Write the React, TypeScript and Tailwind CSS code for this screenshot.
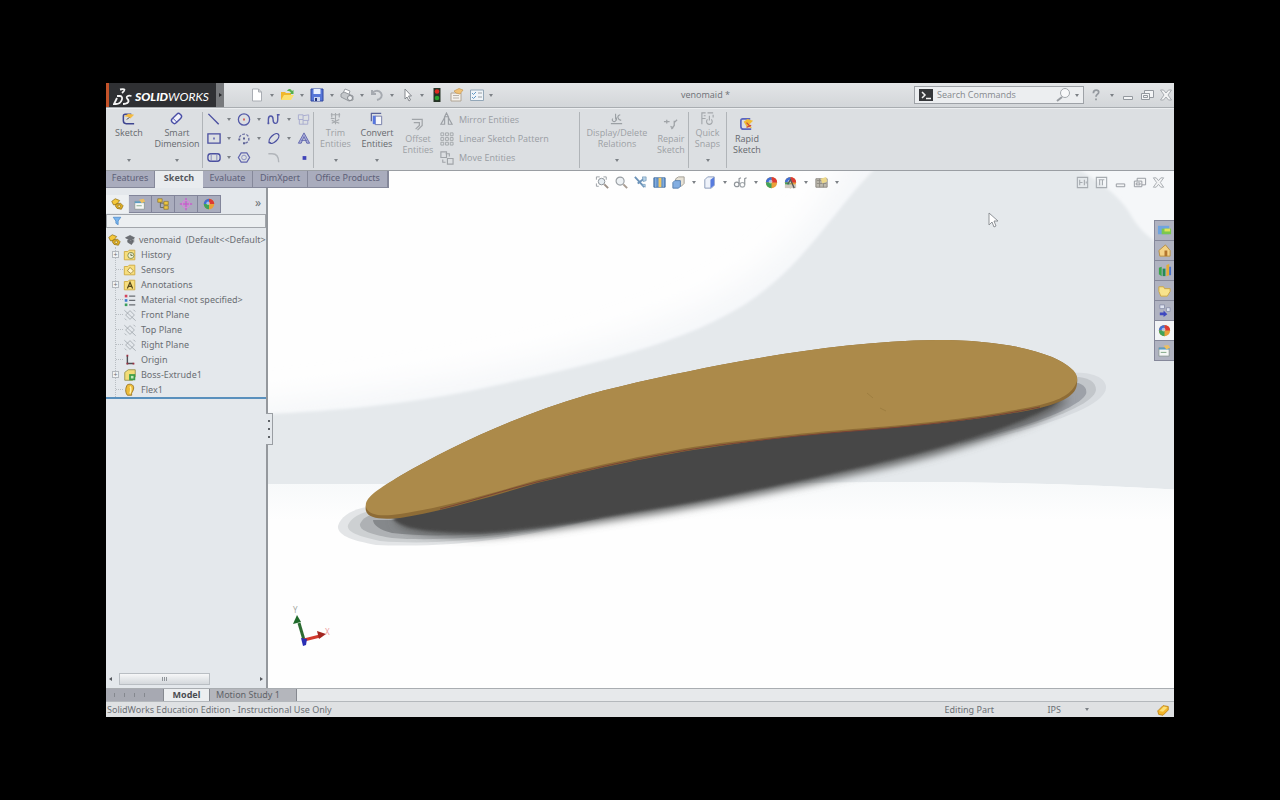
import type { ReactNode } from "react";
import { clsx } from "clsx";

const Icon = ({ children, className }: { children: ReactNode; className?: string }) => (
  <svg viewBox="0 0 16 16" fill="none" aria-hidden="true" className={clsx("shrink-0", className ?? "h-4 w-4")}>
    {children}
  </svg>
);

const Ball = () => (
  <>
    <circle cx="8" cy="8" r="6" fill="#e9a13a" />
    <path d="M8 8V2a6 6 0 0 1 6 6Z" fill="#dc3a35" />
    <path d="M8 8V2a6 6 0 0 0-6 6Z" fill="#3f6fd6" />
    <path d="M8 8H2a6 6 0 0 0 6 6Z" fill="#3fa45a" />
    <circle cx="7" cy="7" r="2" fill="#fff" opacity=".55" />
  </>
);

const Part = () => (
  <g stroke="#8a6a12" strokeWidth=".8">
    <path d="M2 5 6 2l5 2-3 4-4 1Z" fill="#f5c83a" />
    <path d="m7 8 5-1 3 3-2 4-5-1-2-3Z" fill="#e3b020" />
    <circle cx="10.500" cy="10.500" r="1.500" fill="#fff3b8" />
  </g>
);

const Folder = () => <path d="M1.500 4h4l1.500-1.500h6.500v11h-12Z" fill="#f7de7e" stroke="#cfa83a" />;

const Plane = () => (
  <path d="m3 8 5-5 5 5-5 5ZM1.500 2.500l13 12M4 14l-2-2M12 2l2 2" stroke="#9da3a9" strokeWidth=".9" />
);

const icons = {
  fresh: <path d="M3.500 2h6l3 3v9h-9ZM9.500 2v3h3" fill="#fff" stroke="#a9adb3" />,
  open: (
    <>
      <path d="M2 13V5h4l1 1h5v7Z" fill="#f0b72c" />
      <path d="m2 13 3-5h10l-3 5Z" fill="#fbe070" />
      <path d="M8 4c2-3 4-2 5 0l1.500-1v4H11l1-1c-1-2-2-2-4-2" fill="#55b04a" />
    </>
  ),
  save: (
    <>
      <path d="M2 2h12v12H2Z" fill="#5676d8" stroke="#3047a0" />
      <path d="M4.500 2h7v5h-7Z" fill="#e8f0ff" />
      <path d="M5 10h6v4H5Z" fill="#c8d4f0" />
      <path d="M6 11h2v3H6Z" fill="#27367c" />
    </>
  ),
  print: (
    <>
      <path d="m4 6 2-4 5 2-1 3" fill="#fff" stroke="#9a9ea3" />
      <path d="m2 7 3-2 9 4v4l-4 1-8-4Z" fill="#c5c8cb" stroke="#94989d" />
      <circle cx="11" cy="11" r="2.500" fill="#eceef0" stroke="#85898e" />
    </>
  ),
  undo: <path d="M3 3v4h4M3 7c2-4 7-4 9-1s0 6-4 7" stroke="#a6aab0" strokeWidth="2" />,
  select: <path d="M6 2v10l2-2 2 4 1.500-1-2-4h3Z" fill="#fff" stroke="#85898e" />,
  traffic: (
    <>
      <path d="M4.500 1h7v14h-7Z" fill="#263326" />
      <circle cx="8" cy="4.500" r="2.300" fill="#e02a20" />
      <circle cx="8" cy="11" r="2.300" fill="#2aa52f" />
    </>
  ),
  props: (
    <>
      <path d="M2 6h10v8H2Z" fill="#f4f1ec" stroke="#b0a494" />
      <path d="M4 8.500h6M4 11h6" stroke="#b7b2ab" />
      <path d="m5 4 5-2.500 4 1.500-3 4-4-1Z" fill="#f0c276" stroke="#c79752" strokeWidth=".7" />
    </>
  ),
  options: (
    <>
      <path d="M1.500 3h13v10.500h-13Z" fill="#eff4f8" stroke="#93a7b8" />
      <path d="m3 6 1.500 1.500L7 5M3 10l1.500 1.500L7 9" stroke="#5f96c4" />
      <path d="M9 6h4M9 10h4" stroke="#9aa0a6" />
    </>
  ),
  help: <path d="M5 6c0-5 7-4 6-1 0 2-3 2-3 5M8 12v2" stroke="#94999f" strokeWidth="2" />,
  min: <path d="M3.500 9.500h9v3h-9Z" fill="#f4f5f6" stroke="#94999f" />,
  restore: (
    <>
      <path d="M5.500 3.500h9v7h-9Z" fill="#f4f5f6" stroke="#94999f" />
      <path d="M2.500 6.500h8v6h-8ZM4.500 8.500h4v2h-4Z" fill="#f4f5f6" stroke="#94999f" />
    </>
  ),
  close: (
    <path
      d="M2.500 3h3L8 6l2.500-3h3L10 8l3.500 5h-3L8 10l-2.500 3h-3L6 8Z"
      fill="#f2f3f4"
      stroke="#a0a5aa"
      strokeWidth=".9"
    />
  ),
  sketch: (
    <>
      <path d="M11 3.500H4.500q-2 0-2 2v5q0 3 3 3H14" stroke="#3e4590" strokeWidth="1.600" />
      <path d="M3 5.500 8 3l6 1-4 4-3-2Z" fill="#f3bb42" />
      <path d="m6 9 3-2" stroke="#555" />
    </>
  ),
  dimension: (
    <g transform="rotate(-45 8 8)">
      <rect x="2" y="5" width="12" height="6" rx="2.500" fill="#f1f2fb" stroke="#4a4fa6" strokeWidth="1.500" />
      <path d="M5.500 5v6" stroke="#4a4fa6" />
    </g>
  ),
  line: <path d="m2 2 11 11" stroke="#4a4fa0" strokeWidth="1.500" />,
  circle: (
    <>
      <circle cx="8" cy="8" r="6" stroke="#5258a8" strokeWidth="1.400" />
      <path d="M7 7h2v2H7Z" fill="#d8635a" />
    </>
  ),
  spline: <path d="M2 13V8c0-5 5-5 5 0s5 6 5 0V3M1 12h2M11 3h3" stroke="#5258a8" strokeWidth="1.500" />,
  plane: <path d="M2 3h5v5H2ZM7 4l6-1v6H7M3 8v5h9V9M7 8v5" stroke="#a8abcf" />,
  rect: (
    <>
      <path d="M1.500 3h13v10h-13Z" stroke="#4a4fa0" strokeWidth="1.400" />
      <path d="M7 7h2v2H7Z" fill="#7378b8" />
    </>
  ),
  arc: (
    <>
      <path d="M3 7c2-5 9-5 10 0 1 4-2 6-5 6" stroke="#6c70a5" strokeWidth="1.400" strokeDasharray="3 1.500" />
      <path d="M7 7h2v2H7ZM2 8h2v2H2ZM7 12h2v2H7Z" fill="#565b8f" />
    </>
  ),
  ellipse: (
    <>
      <ellipse cx="8" cy="8" rx="6.500" ry="3.500" transform="rotate(-45 8 8)" stroke="#4a4fa0" strokeWidth="1.400" />
      <path d="M2 12.500h3" stroke="#4a4fa0" />
    </>
  ),
  text: <path d="M2 13 8 2l6 11h-3L8 6l-3 7ZM5 10h6" fill="#a9add9" stroke="#6267ae" />,
  slot: (
    <>
      <rect x="1.500" y="4" width="13" height="8" rx="3" stroke="#4a4fa0" strokeWidth="1.400" />
      <path d="M5 4v8M11 4v8" stroke="#8387bb" />
    </>
  ),
  polygon: (
    <>
      <path d="m5 3-3 5 3 5h6l3-5-3-5Z" stroke="#6065ad" strokeWidth="1.300" />
      <circle cx="8" cy="8" r="2.500" stroke="#8a8ec2" />
    </>
  ),
  fillet: <path d="M2 4h4c5 0 7 3 7 9" stroke="#b1b5ba" strokeWidth="1.500" />,
  point: <path d="M6.500 6.500h4v4h-4Z" fill="#3f43b8" />,
  trim: <path d="M4 2v5M8 2v12M3 4h10M3 8h4M12 2v5M4 10l8 3M12 9l-8 4" stroke="#a6aaae" strokeWidth="1.200" />,
  convert: (
    <>
      <path d="M2 2.500h11M2.500 2v9" stroke="#5a6398" strokeWidth="1.300" />
      <path d="M6.500 5.500h7v9h-7Z" fill="#f5f6fa" stroke="#747ba8" />
      <path d="M4 5h3v9H4Z" fill="#5676e0" />
    </>
  ),
  offset: <path d="M2 2.500h11V9l-5 5M4 6h6v3l-4 4" stroke="#a0a4a8" strokeWidth="1.300" />,
  mirror: <path d="m8 1 2 4H6ZM6 6l-4 7h4ZM10 6l4 7h-4Z" stroke="#9ca0a5" strokeWidth="1.200" />,
  pattern: (
    <path
      d="M2 2h3v3H2ZM7 2h3v3H7ZM12 2h3v3h-3ZM2 7h3v3H2ZM7 7h3v3H7ZM12 7h3v3h-3ZM2 12h3v3H2ZM7 12h3v3H7ZM12 12h3v3h-3Z"
      stroke="#a2a6aa"
    />
  ),
  move: <path d="M2 2h6v6H2ZM9 9h6v6H9ZM4 10v3h3M7 4h4v3" stroke="#a0a4a8" strokeWidth="1.200" />,
  relations: <path d="M2 13.500h12M4 8a2 2 0 1 0 3 0V3M8 10V7M12 4c-4 1-3 5 1 6" stroke="#9ba0a4" strokeWidth="1.200" />,
  repair: <path d="M1 5h6M4 3v4M9 13l3-4V4M12 6l3-3M8 10l3 2" stroke="#a0a4a8" strokeWidth="1.400" />,
  snaps: <path d="M2 14V2h4M8 2h6M14 4v3M4 5h2M2.500 8H6M12 9a3 3 0 1 1-4 0M10 5v5" stroke="#a3a7ab" strokeWidth="1.200" />,
  rapid: (
    <>
      <path d="M12 2H4q-2 0-2 2v6q0 3 3 3h8" stroke="#5a65bf" strokeWidth="1.800" />
      <path d="m5 5 4-3 6 2-4 4 3 4-6-2Z" fill="#f0bb32" />
      <path d="m8 6 4 4M8 11l5-2" stroke="#cd4a3d" strokeWidth="1.400" />
    </>
  ),
  zoomFit: (
    <>
      <path d="M1.500 5V2H5M9 2h3v3M1.500 9v3H4" stroke="#999ea3" />
      <circle cx="7" cy="7" r="3.500" fill="#e6edf2" stroke="#8c9298" />
      <path d="m10 10 4 4" stroke="#9b8f86" strokeWidth="2" />
    </>
  ),
  zoomArea: (
    <>
      <circle cx="6.500" cy="6.500" r="4.300" fill="#edf1f4" stroke="#989da2" strokeWidth="1.200" />
      <path d="m10 10 4 4" stroke="#a89c92" strokeWidth="2" />
    </>
  ),
  prevView: (
    <>
      <path d="m2 2 10 11M13 3 5 9" stroke="#6c93b9" strokeWidth="2" />
      <path d="M10 2h4v4l-3 1ZM9 10h4v3Z" fill="#b9d3e8" stroke="#6a92b6" strokeWidth=".7" />
    </>
  ),
  section: (
    <>
      <path d="M2 3h12v10H2Z" fill="#5f91ce" stroke="#47709f" />
      <path d="M7 3h3v10H7Z" fill="#efc868" />
      <path d="M4 3v10M12 3v10" stroke="#93b8e1" />
    </>
  ),
  orient: (
    <>
      <path d="m5 4 3-2h6v7l-3 3H5Z" fill="#e7e2d6" stroke="#a09c92" />
      <path d="m2 8 2-2h6v6l-2 2H2Z" fill="#83aee2" stroke="#587fae" />
    </>
  ),
  display: (
    <>
      <path d="m3 5 3-3h7v9l-3 3H3Z" fill="#eef2fa" stroke="#8799b8" />
      <path d="M9 5v9l4-3V2Z" fill="#587cde" />
    </>
  ),
  hide: (
    <>
      <circle cx="4" cy="10" r="2.500" stroke="#92979c" strokeWidth="1.300" />
      <circle cx="10" cy="10.500" r="2.500" stroke="#a5aaae" strokeWidth="1.300" />
      <path d="M6.500 10V4l2-1M12.500 10V4l2-1" stroke="#92979c" strokeWidth="1.300" />
    </>
  ),
  ball: <Ball />,
  scene: (
    <>
      <Ball />
      <path d="M2 10h12v4H2Z" fill="#cfc8be" />
      <path d="m5 10 3-5 4 9" stroke="#565b57" strokeWidth="1.400" />
    </>
  ),
  settings: (
    <>
      <path d="M2 4h12v9H2Z" fill="#bdb9ae" stroke="#8c8880" />
      <path d="M3 6h10M3 9h10M6 4v9M10 4v9" stroke="#8d897f" />
      <path d="m7 4 6-2 1 5-5 2Z" fill="#edd88a" />
    </>
  ),
  tileV: <path d="M2.500 2.500h11v11h-11ZM5 5v6M5 8h3M10 5v6M12 7v2" stroke="#a7acb1" strokeWidth="1.200" />,
  tileH: <path d="M2.500 2.500h11v11h-11ZM5 5h6M6 5v6M9 5v6" stroke="#a7acb1" strokeWidth="1.200" />,
  part: <Part />,
  manager: (
    <>
      <path d="M2 5h11v9H2Z" fill="#f5f7f5" stroke="#8e9998" />
      <path d="M2 5h11v2H2Z" fill="#5c9dc4" />
      <path d="m7 3 5-1 2 3-4 2Z" fill="#edbf62" />
      <path d="M4 10h6" stroke="#7aa27f" />
    </>
  ),
  config: (
    <>
      <path d="M5 4v8h4M5 7h4" stroke="#5f645f" />
      <path d="M2 2h5v4H2ZM9 5h5v4H9ZM9 10h5v4H9Z" fill="#ecc641" stroke="#8a7430" strokeWidth=".8" />
    </>
  ),
  dimx: (
    <>
      <path d="M8 1v14M1 8h14" stroke="#c75fcc" strokeWidth="1.600" />
      <circle cx="8" cy="8" r="4" stroke="#d884da" strokeWidth="1.300" />
    </>
  ),
  filter: <path d="M3 3h10L9.500 8v5l-3-2V8Z" fill="#79b5ee" stroke="#4b88c8" />,
  cap: <path d="m2 5 6-3 6 3-5 4ZM5 8v3l5 3 2-3V8M13 6v5" fill="#6d7075" stroke="#54575c" strokeWidth=".8" />,
  history: (
    <>
      <Folder />
      <circle cx="9" cy="8.500" r="3.500" fill="#eef0d8" stroke="#7f8a4c" />
      <path d="M9 6.500v2h2" stroke="#5a6330" />
    </>
  ),
  sensors: (
    <>
      <Folder />
      <path d="m5 9 3-4 4 4-3 3Z" fill="#fff6d0" stroke="#a58b3d" />
    </>
  ),
  notes: (
    <>
      <Folder />
      <path d="M5 12 8 5l3 7M6 9.500h4" stroke="#55481c" strokeWidth="1.400" />
    </>
  ),
  material: (
    <>
      <path d="M2 2h3v3H2Z" fill="#d3445c" />
      <path d="M2 7h3v3H2Z" fill="#3f7cd0" />
      <path d="M2 12h3v3H2Z" fill="#3a9e5a" />
      <path d="M7 3.500h7M7 8.500h7M7 13.500h7" stroke="#686c72" strokeWidth="1.400" />
    </>
  ),
  refPlane: <Plane />,
  origin: (
    <>
      <path d="M5 3v9h7" stroke="#4b4f54" strokeWidth="1.600" />
      <path d="M4 2h2v2H4ZM11 11h2v2h-2ZM4 11h2v2H4Z" fill="#a03042" />
    </>
  ),
  extrude: (
    <>
      <path d="m2 5 4-3h8v8l-3 4H2Z" fill="#f2dc77" stroke="#96914a" />
      <path d="M7 7h7v7H7Z" fill="#3c9c48" />
      <path d="M9 9h3v3H9Z" fill="#c4ebb8" />
    </>
  ),
  flex: (
    <>
      <path d="M5 2c5-2 8 1 7 5s-3 4-2 7H5C2 10 3 5 5 2Z" fill="#eebd3a" stroke="#987422" />
      <path d="M8 4c2 2 1 4 0 8" stroke="#fff2b4" strokeWidth="1.600" />
    </>
  ),
  resources: (
    <>
      <path d="M1 3h12v9H1Z" fill="#6fa4e0" />
      <path d="M5 6h10v6H5Z" fill="#7cc84e" />
      <path d="M8 6h6v3H8Z" fill="#e0e457" />
    </>
  ),
  home: (
    <>
      <path d="m2 8 7-6 5 6v6H3Z" fill="#f3d286" stroke="#b98f42" />
      <path d="M8 8h3v6H8Z" fill="#b3762f" />
    </>
  ),
  library: (
    <>
      <path d="m2 5 3-1v10l-3-2Z" fill="#38a64a" />
      <path d="M6 6h3v8H6Z" fill="#258a55" />
      <path d="m10 2 3-1v12l-3 1Z" fill="#e5ad37" />
      <path d="M13 4h2v9h-2Z" fill="#4872cd" />
    </>
  ),
  explorer: <path d="M2 4h5l1 2h6v3l-3 5H4L2 9Z" fill="#f8e38c" stroke="#cba545" />,
  palette: (
    <>
      <path d="M3 2h5v4H3ZM10 5h4v4h-4Z" fill="#dfe4f1" stroke="#8e94ae" />
      <path d="M3 10h4V8l4 4-4 3v-2H3Z" fill="#3f48c0" />
    </>
  ),
  tag: (
    <>
      <path d="m2 9 6-6 6 1v4l-6 6-5-1Z" fill="#f3b62a" stroke="#bf8517" />
      <path d="m4 9 5-5 4 1-5 5Z" fill="#fbe07a" />
    </>
  ),
};

type IconName = keyof typeof icons;

const Caret = ({ label, className }: { label: string; className?: string }) => (
  <button type="button" aria-label={`${label} menu`} className={clsx("flex shrink-0 items-center justify-center", className ?? "h-4 w-3")}>
    <svg viewBox="0 0 4 3" className="h-[3px] w-1" aria-hidden="true">
      <path d="M0 0h4L2 3Z" fill="#7c8186" />
    </svg>
  </button>
);

const IconButton = ({ icon, label, className, size }: { icon: IconName; label: string; className?: string; size?: string }) => (
  <button type="button" title={label} aria-label={label} className={clsx("flex shrink-0 items-center justify-center", className)}>
    <Icon className={size ?? "h-4 w-4"}>{icons[icon]}</Icon>
  </button>
);

const fileTools: { icon: IconName; label: string }[] = [
  { icon: "fresh", label: "New" },
  { icon: "open", label: "Open" },
  { icon: "save", label: "Save" },
  { icon: "print", label: "Print" },
  { icon: "undo", label: "Undo" },
  { icon: "select", label: "Select" },
];

const TitleBar = () => (
  <header className="flex h-[25px] shrink-0 items-center border-b border-[#a9adb1] bg-linear-to-b from-[#e3e5e7] to-[#d3d6d9] font-['Open_Sans','Noto_Sans',sans-serif]">
    <div className="flex h-full w-[110px] shrink-0 items-center gap-[2px] border-l-[3px] border-[#c4532a] bg-[#2f3033] pt-[3px] pl-1 text-white">
      <svg viewBox="0 0 20 18" className="h-[18px] w-5" fill="none" stroke="#f4f4f4" strokeWidth="1.800" aria-hidden="true">
        <path d="M7 1.500c5-1 6 0 2 3.500M4 8h3c4 0 2 8-4 8H1l3-6M18.500 8c-4-1-6 1-4 3s1 5-4.500 5" />
      </svg>
      <span className="font-[Lato] text-[12px] leading-4 font-black italic">
        SOLID<span className="font-normal">WORKS</span>
      </span>
    </div>
    <button type="button" aria-label="Show menus" className="flex h-full w-2 shrink-0 items-center justify-center bg-[#77797c]">
      <svg viewBox="0 0 3 4" className="h-1 w-[3px]" aria-hidden="true">
        <path d="M0 0v4l3-2Z" fill="#26272a" />
      </svg>
    </button>
    <div className="flex items-center pl-[25px]">
      {fileTools.map((tool) => (
        <div key={tool.label} className="flex">
          <IconButton {...tool} />
          <Caret label={tool.label} className="h-4 w-[14px]" />
        </div>
      ))}
      <div className="flex gap-1">
        <IconButton icon="traffic" label="Rebuild" />
        <IconButton icon="props" label="File Properties" />
        <IconButton icon="options" label="Options" />
      </div>
      <Caret label="Options" />
    </div>
    <h1 className="min-w-0 flex-1 text-center text-[9px] text-[#6c7075]">venomaid *</h1>
    <form className="flex h-[18px] w-[170px] shrink-0 items-center border border-[#9ea2a7] bg-[#eceef0] pl-1">
      <svg viewBox="0 0 14 12" className="h-3 w-[14px] shrink-0" aria-hidden="true">
        <path d="M0 0h14v12H0Z" fill="#35373a" />
        <path d="m3 3 3 3-3 3M7 9.500h5" stroke="#f2f2f2" strokeWidth="1.500" fill="none" />
      </svg>
      <input
        type="text"
        aria-label="Search Commands"
        placeholder="Search Commands"
        className="min-w-0 flex-1 bg-transparent pl-1 text-[9px] text-[#6c7075] outline-none placeholder:text-[#85898e]"
      />
      <button type="button" aria-label="Search" className="shrink-0">
        <Icon>
          <circle cx="10" cy="6" r="4.500" fill="#f8f9fa" stroke="#a3a8ad" />
          <path d="m7 10-5 4" stroke="#989ca1" strokeWidth="2" />
        </Icon>
      </button>
      <Caret label="Search" />
    </form>
    <div className="flex shrink-0 items-center gap-[3px] pl-1">
      <IconButton icon="help" label="Help" size="h-[14px] w-4" />
      <Caret label="Help" className="h-4 w-[10px]" />
      <IconButton icon="min" label="Minimize" />
      <IconButton icon="restore" label="Restore" />
      <IconButton icon="close" label="Close" />
    </div>
  </header>
);

interface ToolProps {
  icon: IconName;
  lines: string[];
  width: string;
  enabled?: boolean;
  menu?: boolean;
  low?: boolean;
}

const ToolButton = ({ icon, lines, width, enabled, menu, low }: ToolProps) => (
  <div className={clsx("flex h-full shrink-0 flex-col items-center justify-between pb-[6px]", width, low ? "pt-2" : "pt-[2px]")}>
    <button
      type="button"
      disabled={!enabled}
      className={clsx(
        "flex flex-col items-center text-center text-[9px] leading-[11px] whitespace-nowrap",
        enabled ? "text-[#66696e]" : "text-[#9da1a5]",
      )}
    >
      <Icon className="mb-px h-[15px] w-[15px]">{icons[icon]}</Icon>
      {lines.map((line) => (
        <span key={line}>{line}</span>
      ))}
    </button>
    {menu && <Caret label={lines.join(" ")} className="h-2 w-3" />}
  </div>
);

const Rule = () => <div className="h-[56px] w-px shrink-0 bg-[#b0b4b8]" />;

const shapes: { icon: IconName; label: string; menu?: boolean }[] = [
  { icon: "line", label: "Line", menu: true },
  { icon: "circle", label: "Circle", menu: true },
  { icon: "spline", label: "Spline", menu: true },
  { icon: "plane", label: "Plane" },
  { icon: "rect", label: "Rectangle", menu: true },
  { icon: "arc", label: "Arc", menu: true },
  { icon: "ellipse", label: "Ellipse", menu: true },
  { icon: "text", label: "Text" },
  { icon: "slot", label: "Slot", menu: true },
  { icon: "polygon", label: "Polygon" },
  { icon: "fillet", label: "Fillet" },
  { icon: "point", label: "Point" },
];

const entityTools: { icon: IconName; label: string }[] = [
  { icon: "mirror", label: "Mirror Entities" },
  { icon: "pattern", label: "Linear Sketch Pattern" },
  { icon: "move", label: "Move Entities" },
];

const Ribbon = () => (
  <div className="flex h-[62px] shrink-0 items-center overflow-hidden border-t border-[#eceef0] bg-[#dcdfe2] font-['Open_Sans','Noto_Sans',sans-serif]">
    <ToolButton icon="sketch" lines={["Sketch"]} width="w-[46px]" enabled menu />
    <ToolButton icon="dimension" lines={["Smart", "Dimension"]} width="w-[50px]" enabled menu />
    <Rule />
    <div className="grid w-[110px] shrink-0 grid-cols-[30px_30px_30px_16px] gap-y-[3px] pb-[3px] pl-[3px]">
      {shapes.map((shape) => (
        <div key={shape.label} className="flex">
          <IconButton icon={shape.icon} label={shape.label} size="h-[15px] w-4" />
          {shape.menu && <Caret label={shape.label} className="h-4 w-[14px]" />}
        </div>
      ))}
    </div>
    <Rule />
    <ToolButton icon="trim" lines={["Trim", "Entities"]} width="w-[43px]" menu />
    <ToolButton icon="convert" lines={["Convert", "Entities"]} width="w-[40px]" enabled menu />
    <ToolButton icon="offset" lines={["Offset", "Entities"]} width="w-[42px]" low />
    <div className="flex w-[140px] shrink-0 flex-col gap-[3px] pb-[2px]">
      {entityTools.map(({ icon, label }) => (
        <button key={label} type="button" disabled className="flex items-center gap-[5px] text-[9px] leading-4 text-[#999da2]">
          <Icon className="h-[15px] w-[15px]">{icons[icon]}</Icon>
          {label}
        </button>
      ))}
    </div>
    <Rule />
    <ToolButton icon="relations" lines={["Display/Delete", "Relations"]} width="w-[74px]" menu />
    <ToolButton icon="repair" lines={["Repair", "Sketch"]} width="w-[34px]" low />
    <Rule />
    <ToolButton icon="snaps" lines={["Quick", "Snaps"]} width="w-[37px]" menu />
    <Rule />
    <ToolButton icon="rapid" lines={["Rapid", "Sketch"]} width="w-[40px]" enabled low />
  </div>
);

const ribbonTabs = [
  { label: "Features", width: "w-[49px]" },
  { label: "Sketch", width: "w-[48px]", active: true },
  { label: "Evaluate", width: "w-[50px]" },
  { label: "DimXpert", width: "w-[55px]" },
  { label: "Office Products", width: "w-[80px]" },
];

const RibbonTabs = () => (
  <nav className="z-10 col-span-2 col-start-1 row-start-1 flex justify-self-start border-r border-[#85889a]">
    {ribbonTabs.map((tab) => (
      <button
        key={tab.label}
        type="button"
        className={clsx(
          "h-[17px] border-b pb-[2px] text-[9px] leading-3 whitespace-nowrap",
          tab.width,
          tab.active
            ? "border-[#e9ecef] bg-[#e9ecef] font-bold text-[#55585e]"
            : "border-r border-[#85889a] bg-[#a9acbd] text-[#5d6078]",
        )}
      >
        {tab.label}
      </button>
    ))}
  </nav>
);

const panelTabs: { icon: IconName; label: string; active?: boolean }[] = [
  { icon: "part", label: "FeatureManager", active: true },
  { icon: "manager", label: "PropertyManager" },
  { icon: "config", label: "ConfigurationManager" },
  { icon: "dimx", label: "DimXpertManager" },
  { icon: "ball", label: "DisplayManager" },
];

const features: { icon: IconName; label: string; expandable?: boolean }[] = [
  { icon: "history", label: "History", expandable: true },
  { icon: "sensors", label: "Sensors" },
  { icon: "notes", label: "Annotations", expandable: true },
  { icon: "material", label: "Material <not specified>" },
  { icon: "refPlane", label: "Front Plane" },
  { icon: "refPlane", label: "Top Plane" },
  { icon: "refPlane", label: "Right Plane" },
  { icon: "origin", label: "Origin" },
  { icon: "extrude", label: "Boss-Extrude1", expandable: true },
  { icon: "flex", label: "Flex1" },
];

const FeaturePanel = () => (
  <aside className="col-start-1 row-start-2 flex min-h-0 min-w-0 flex-col border-r-2 border-[#94989d] bg-[#e4e8ec] pt-[6px]">
    <div className="flex h-[19px] shrink-0 items-end">
      {panelTabs.map((tab) => (
        <IconButton
          key={tab.label}
          icon={tab.icon}
          label={tab.label}
          size="h-[14px] w-[14px]"
          className={clsx(
            "h-[18px] w-[23px] border-r",
            tab.active ? "border-[#e4e8ec] bg-[#edf0f2]" : "border-y border-[#82859a] bg-[#a9acbd]",
          )}
        />
      ))}
      <button type="button" aria-label="Expand panel" className="ml-auto w-4 pb-[2px] text-[12px] leading-4 text-[#6c7075]">
        »
      </button>
    </div>
    <label className="mt-px flex h-[14px] shrink-0 items-center border border-[#a2a6ab] bg-[#eceff1] pl-1">
      <Icon className="h-3 w-3">{icons.filter}</Icon>
      <input type="text" aria-label="Filter" className="min-w-0 flex-1 bg-transparent text-[9px] outline-none" />
    </label>
    <div className="mt-1 flex h-[15px] shrink-0 items-center gap-[3px] overflow-hidden pl-px text-[9px] whitespace-nowrap text-[#6a6e73]">
      <Icon className="h-[14px] w-[14px]">{icons.part}</Icon>
      <Icon className="h-3 w-3">{icons.cap}</Icon>
      <span className="whitespace-pre">venomaid  (Default&lt;&lt;Default&gt;</span>
    </div>
    <ul className="ml-[9px] border-l border-dotted border-[#b9bec3] text-[9px] text-[#6a6e73]">
      {features.map(({ icon, label, expandable }) => (
        <li key={label} className="flex h-[15px] items-center whitespace-nowrap">
          {expandable ? (
            <button
              type="button"
              aria-label={`Expand ${label}`}
              className="relative -left-1 flex h-[7px] w-[7px] items-center justify-center border border-[#b4b9be] bg-[#f2f4f5] text-[7px] leading-[5px]"
            >
              +
            </button>
          ) : (
            <span className="w-[7px] border-t border-dotted border-[#b9bec3]" />
          )}
          <Icon className="h-[14px] w-[14px]">{icons[icon]}</Icon>
          <span className="pl-1">{label}</span>
        </li>
      ))}
    </ul>
    <div className="h-[2px] shrink-0 bg-[#5990bd]" />
    <div className="mt-auto mb-[2px] flex h-[14px] items-center justify-between px-[3px]">
      <button type="button" aria-label="Scroll left" className="flex h-3 w-[10px] items-center">
        <svg viewBox="0 0 3 4" className="h-1 w-[3px]" aria-hidden="true">
          <path d="M3 0v4L0 2Z" fill="#55595e" />
        </svg>
      </button>
      <div className="flex flex-1">
        <div className="flex h-3 w-[91px] items-center justify-center gap-px border border-[#b9bec3] bg-linear-to-b from-[#f6f7f8] to-[#d4d8dc]">
          <span className="h-1 w-px bg-[#90959a]" />
          <span className="h-1 w-px bg-[#90959a]" />
          <span className="h-1 w-px bg-[#90959a]" />
        </div>
      </div>
      <button type="button" aria-label="Scroll right" className="flex h-3 w-[6px] items-center justify-end">
        <svg viewBox="0 0 3 4" className="h-1 w-[3px]" aria-hidden="true">
          <path d="M0 0v4l3-2Z" fill="#55595e" />
        </svg>
      </button>
    </div>
  </aside>
);

const Scene = () => (
  <svg viewBox="268 171 906 517" preserveAspectRatio="xMidYMid slice" className="absolute inset-0 h-full w-full" role="img" aria-label="Extruded board model">
    <defs>
      <filter id="haze" x="-20%" y="-20%" width="140%" height="140%">
        <feGaussianBlur stdDeviation="14" />
      </filter>
      <filter id="edge" x="-10%" y="-10%" width="120%" height="120%">
        <feGaussianBlur stdDeviation="1.500" />
      </filter>
      <filter id="shade" x="-10%" y="-20%" width="120%" height="140%">
        <feGaussianBlur stdDeviation="4" />
      </filter>
      <linearGradient id="floor" x1="0" y1="0" x2="0" y2="1">
        <stop offset="0" stopColor="#f7f9fa" />
        <stop offset="1" stopColor="#fefefe" />
      </linearGradient>
      <clipPath id="wall">
        <path d="M260 160H1180V490Q1060 482 900 482L700 484H260Z" />
      </clipPath>
    </defs>
    <path d="M260 160h920v540H260Z" fill="#fefefe" />
    <g clipPath="url(#wall)">
      <path d="M240 405C430 385 580 360 700 305C790 260 830 200 860 130H1200V560H240Z" fill="#f5f7f9" filter="url(#haze)" />
      <path
        d="M240 415C330 412 400 405 470 391C590 365 680 345 744 305C810 262 835 205 884 160H1062C1090 176 1115 190 1129 212C1140 232 1155 247 1200 262V530H240Z"
        fill="#e5e9ec"
        filter="url(#edge)"
      />
    </g>
    <path d="M260 484L700 484L900 482Q1060 482 1180 490V520H260Z" fill="url(#floor)" />

    <path d="M338 526C342 512 362 505 390 505H480L600 518C520 540 440 548 376 545C354 541 337 536 338 526Z" fill="#e3e5e7" />
    <path d="M348 525C354 513 370 509 395 509H480L600 518C520 538 435 546 380 541C362 537 346 533 348 525Z" fill="#cdd0d2" />
    <path d="M360 524C364 515 375 512 398 512H480L600 518C520 536 440 542 392 538C374 535 359 531 360 524Z" fill="#aeb1b4" />
    <path d="M373 520H480L600 518C520 534 440 539 392 533C380 530 373 525 373 520Z" fill="#85888b" />
    <path d="M1070 373C1092 371 1107 378 1106 388C1105 404 1060 424 960 446V400Z" fill="#d8dce0" />
    <path d="M1070 377C1086 376 1096 381 1096 390C1094 404 1050 423 960 444V400Z" fill="#c2c6ca" />
    <path d="M1070 382C1080 382 1088 386 1086 394C1080 406 1040 424 960 443V400Z" fill="#9da1a8" />
    <path
      d="M394 520C400 531 425 536 480 537C540 533 600 522 653 514C720 503 787 489 870 471C930 458 985 441 1030 424C1050 415 1062 408 1070 398L930 410L700 435Z"
      fill="#626363"
      filter="url(#shade)"
    />
    <path
      d="M392 518C400 528 425 533 480 533C540 529 600 518 653 509C720 498 787 484 870 465C930 451 985 436 1025 419C1045 410 1056 405 1062 398L930 408L700 430Z"
      fill="#464646"
      filter="url(#edge)"
    />
    <path
      d="M366 511C363 500 378 490 400 476C450 447 510 418 587 395C630 383 680 373 720 365C790 352 860 341 937 340C990 340 1027 347 1052 357C1070 365 1079 374 1077 383C1077 396 1060 403 1040 408C990 419 920 426 853 431C790 436 755 441 720 446C650 456 600 468 537 483C490 497 440 512 400 518C380 520 368 518 366 511Z"
      fill="#8e6c36"
    />
    <path
      d="M366 507C364 498 378 489 400 476C450 447 510 418 587 395C630 383 680 373 720 365C790 352 860 341 937 340C990 340 1027 347 1052 357C1070 365 1079 373 1077 381C1073 394 1060 400 1040 405C990 416 920 424 853 429C790 434 755 439 720 443C650 453 600 465 537 480C490 494 440 508 400 514C380 517 368 515 366 507Z"
      fill="#ac8a4a"
    />
    <path
      d="M440 509C475 500 505 490 537 482C600 467 650 455 720 445C755 441 790 436 853 431C920 426 990 418 1040 407"
      stroke="#7a4335"
      strokeWidth="1"
      fill="none"
    />
    <path d="m867 393 6 5M880 408l6 3" stroke="#98783c" strokeWidth=".7" />

    <path d="m304 640-5-17" stroke="#2c6b32" strokeWidth="3" />
    <path d="m297 615-4 9 8-2Z" fill="#1f6a2a" />
    <path d="m304 640 16-4" stroke="#d2392e" strokeWidth="3" />
    <path d="m326 634-9-3 2 8Z" fill="#a32620" />
    <path d="m301 638 6 1-1 6-3 1Z" fill="#2b2fb4" />
    <text x="293" y="613" fontSize="8" fill="#a3a7a3">
      Y
    </text>
    <text x="325" y="635" fontSize="8" fill="#ee9c9c">
      X
    </text>

    <path d="M989 213v12l3-3 2 5 2-1-2-5h4Z" fill="#fff" stroke="#83888d" strokeWidth=".9" />
  </svg>
);

const viewTools: { icon: IconName; label: string; menu?: boolean }[] = [
  { icon: "zoomFit", label: "Zoom to Fit" },
  { icon: "zoomArea", label: "Zoom to Area" },
  { icon: "prevView", label: "Previous View" },
  { icon: "section", label: "Section View" },
  { icon: "orient", label: "View Orientation", menu: true },
  { icon: "display", label: "Display Style", menu: true },
  { icon: "hide", label: "Hide/Show Items", menu: true },
  { icon: "ball", label: "Edit Appearance" },
  { icon: "scene", label: "Apply Scene", menu: true },
  { icon: "settings", label: "View Settings", menu: true },
];

const windowTools: { icon: IconName; label: string }[] = [
  { icon: "tileV", label: "Tile Left" },
  { icon: "tileH", label: "Tile Right" },
  { icon: "min", label: "Minimize Document" },
  { icon: "restore", label: "Restore Document" },
  { icon: "close", label: "Close Document" },
];

const taskTabs: { icon: IconName; label: string; active?: boolean }[] = [
  { icon: "resources", label: "Resources" },
  { icon: "home", label: "Home" },
  { icon: "library", label: "Design Library" },
  { icon: "explorer", label: "File Explorer" },
  { icon: "palette", label: "View Palette" },
  { icon: "ball", label: "Appearances", active: true },
  { icon: "manager", label: "Custom Properties" },
];

const Viewport = () => (
  <main className="relative col-start-2 row-span-2 row-start-1 min-h-0 min-w-0">
    <Scene />
    <div className="absolute inset-x-0 top-[3px] flex justify-center pr-[6px]">
      {viewTools.map((tool) => (
        <div key={tool.label} className="flex">
          <IconButton icon={tool.icon} label={tool.label} className="w-[19px]" size="h-[15px] w-[15px]" />
          {tool.menu && <Caret label={tool.label} />}
        </div>
      ))}
    </div>
    <div className="absolute top-1 right-[6px] flex">
      {windowTools.map((tool) => (
        <IconButton key={tool.label} {...tool} className="w-[19px]" size="h-[15px] w-[15px]" />
      ))}
    </div>
    <div className="absolute top-[49px] right-0 flex w-5 flex-col border-t border-l border-[#85889a]">
      {taskTabs.map((tab) => (
        <IconButton
          key={tab.label}
          icon={tab.icon}
          label={tab.label}
          className={clsx("h-5 border-b border-[#85889a]", tab.active ? "bg-[#f2f4f6]" : "bg-[#b0b3c1]")}
          size="h-[15px] w-[15px]"
        />
      ))}
    </div>
    <button
      type="button"
      aria-label="Collapse panel"
      className="absolute top-[242px] -left-[2px] flex h-8 w-[7px] flex-col items-center justify-center gap-[6px] border border-l-0 border-[#9a9ea3] bg-[#e4e8ec]"
    >
      <span className="h-[2px] w-[2px] bg-[#5e6267]" />
      <span className="h-[2px] w-[2px] bg-[#5e6267]" />
      <span className="h-[2px] w-[2px] bg-[#5e6267]" />
    </button>
  </main>
);

const BottomTabs = () => (
  <nav className="flex h-[13px] shrink-0 border-t border-[#a9adb1] bg-[#e7e9eb] text-[9px] leading-3 text-[#5f6368]">
    <div className="flex w-[57px] items-center gap-[9px] bg-[#a7a9b2] pl-2">
      <span className="h-1 w-px bg-[#85888f]" />
      <span className="h-1 w-px bg-[#85888f]" />
      <span className="h-1 w-px bg-[#85888f]" />
      <span className="h-1 w-px bg-[#85888f]" />
    </div>
    <button type="button" className="w-[47px] border-x border-[#85888f] bg-[#eceef0] font-bold text-[#4a4d52]">
      Model
    </button>
    <button type="button" className="w-[87px] border-r border-[#85888f] bg-[#b4b6bc] pl-[6px] text-left whitespace-nowrap">
      Motion Study 1
    </button>
  </nav>
);

const StatusBar = () => (
  <footer className="flex h-4 shrink-0 items-center border-t border-[#b4b8bc] bg-[#dfe1e3] pl-px text-[9px] leading-3 text-[#6c7075]">
    <span className="flex-1">SolidWorks Education Edition - Instructional Use Only</span>
    <span className="w-[103px]">Editing Part</span>
    <span>IPS</span>
    <Caret label="Units" className="ml-5 h-3 w-3" />
    <IconButton icon="tag" label="Tags" className="mr-1 ml-[63px]" size="h-[14px] w-[14px]" />
  </footer>
);

export default function App() {
  return (
    <div className="flex min-h-screen flex-col bg-black px-[106px] py-[83px] font-['Noto_Sans','Open_Sans',sans-serif]">
      <div className="flex flex-1 flex-col bg-[#dcdfe2]">
        <TitleBar />
        <Ribbon />
        <div className="grid min-h-0 flex-1 grid-cols-[162px_minmax(0,1fr)] grid-rows-[17px_minmax(480px,1fr)] border-t border-[#9a9ea3]">
          <RibbonTabs />
          <FeaturePanel />
          <Viewport />
        </div>
        <BottomTabs />
        <StatusBar />
      </div>
    </div>
  );
}
